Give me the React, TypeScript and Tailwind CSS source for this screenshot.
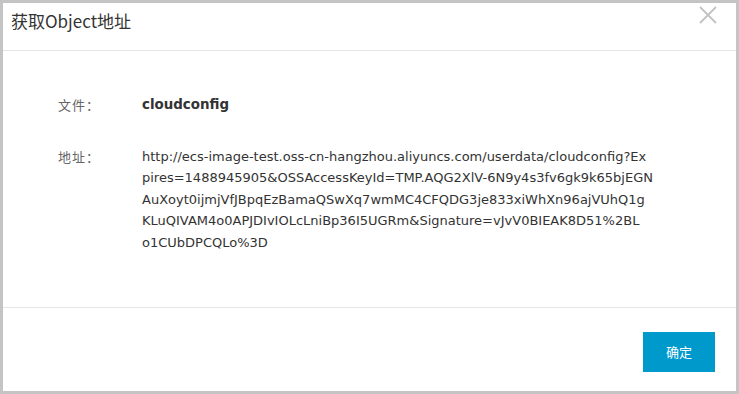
const urlLines = [
  'http://ecs-image-test.oss-cn-hangzhou.aliyuncs.com/userdata/cloudconfig?Ex',
  'pires=1488945905&OSSAccessKeyId=TMP.AQG2XlV-6N9y4s3fv6gk9k65bjEGN',
  'AuXoyt0ijmjVfJBpqEzBamaQSwXq7wmMC4CFQDG3je833xiWhXn96ajVUhQ1g',
  'KLuQIVAM4o0APJDIvIOLcLniBp36I5UGRm&Signature=vJvV0BIEAK8D51%2BL',
  'o1CUbDPCQLo%3D',
];

export default function App() {
  return (
    <div className="w-[739px] h-[394px] border-[3px] border-[#c4c4c4] bg-white flex flex-col [font-family:'DejaVu_Sans','Noto_Sans_CJK_SC',sans-serif]">
      {/* Header */}
      <div className="h-[48px] flex-shrink-0 border-b border-[#e5e5e5] flex items-start justify-between pl-[8px] pr-[19px]">
        <h1 className="pt-[6px] text-[17px] leading-[24px] text-[#333] [font-family:'Noto_Sans_CJK_SC',sans-serif]">
          获取Object地址
        </h1>
        <svg viewBox="0 0 18 18" className="w-[18px] h-[18px] mt-[3px] text-[#c2c2c2]" fill="none" stroke="currentColor" strokeWidth={1.8}>
          <path d="M1 1L17 17M17 1L1 17" />
        </svg>
      </div>

      {/* Body */}
      <div className="flex-1 border-b border-[#e5e5e5] pt-[43px] pl-[55px]">
        <div className="flex leading-[21.5px]">
          <span className="w-[84px] text-[13px] tracking-[1px] text-[#666] [font-family:'Noto_Sans_CJK_SC',sans-serif]">文件：</span>
          <span className="font-bold text-[13.4px] text-[#333]">cloudconfig</span>
        </div>
        <div className="flex mt-[30px] leading-[21.5px]">
          <span className="w-[84px] text-[13px] tracking-[1px] text-[#666] [font-family:'Noto_Sans_CJK_SC',sans-serif]">地址：</span>
          <div className="text-[13px] text-[#333]">
            {urlLines.map((line) => (
              <div key={line}>{line}</div>
            ))}
          </div>
        </div>
      </div>

      {/* Footer */}
      <div className="h-[83px] flex-shrink-0 flex justify-end items-start pt-[24px] pr-[21px]">
        <button className="w-[72px] h-[40px] bg-[#0099cc] text-white text-[13px] [font-family:'Noto_Sans_CJK_SC',sans-serif]">
          确定
        </button>
      </div>
    </div>
  );
}
